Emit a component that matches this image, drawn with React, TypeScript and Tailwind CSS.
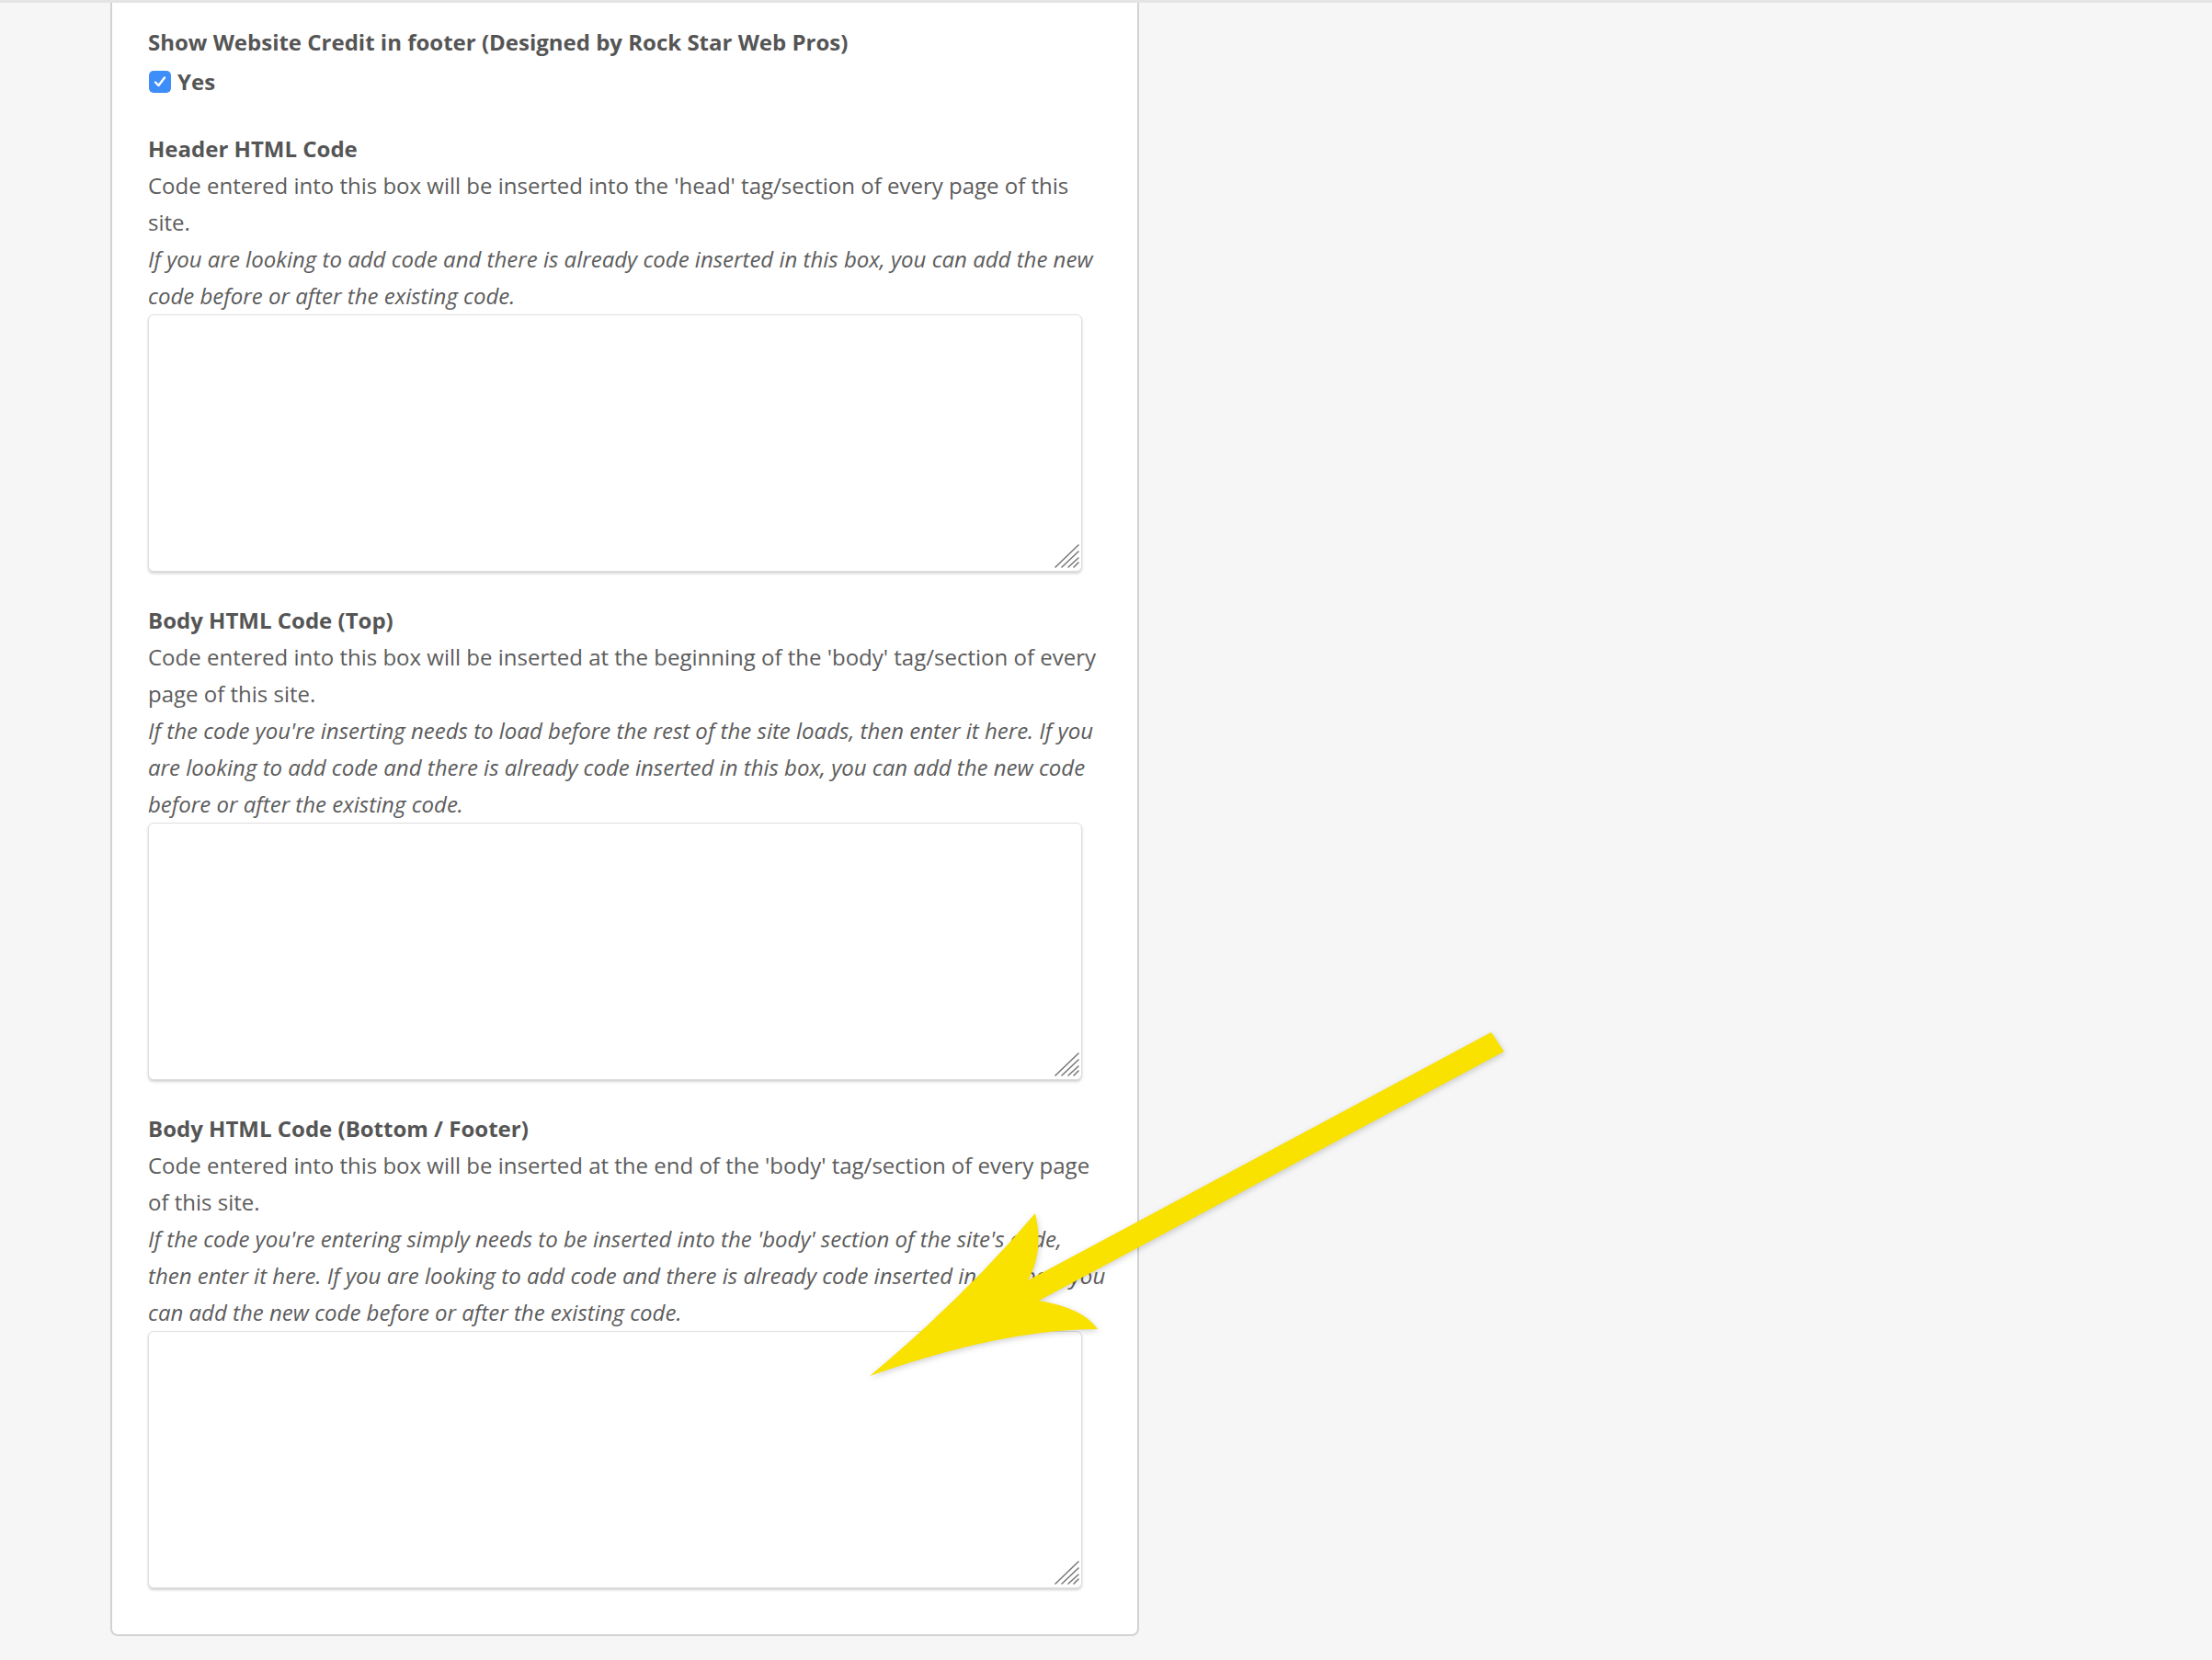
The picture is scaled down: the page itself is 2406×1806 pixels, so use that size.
import type { ReactNode } from 'react'

const fields = [
  {
    label: 'Header HTML Code',
    description: "Code entered into this box will be inserted into the 'head' tag/section of every page of this site.",
    note: 'If you are looking to add code and there is already code inserted in this box, you can add the new code before or after the existing code.',
  },
  {
    label: 'Body HTML Code (Top)',
    description: "Code entered into this box will be inserted at the beginning of the 'body' tag/section of every page of this site.",
    note: "If the code you're inserting needs to load before the rest of the site loads, then enter it here. If you are looking to add code and there is already code inserted in this box, you can add the new code before or after the existing code.",
  },
  {
    label: 'Body HTML Code (Bottom / Footer)',
    description: "Code entered into this box will be inserted at the end of the 'body' tag/section of every page of this site.",
    note: "If the code you're entering simply needs to be inserted into the 'body' section of the site's code, then enter it here. If you are looking to add code and there is already code inserted in this box, you can add the new code before or after the existing code.",
  },
]

function ResizeGrip() {
  return (
    <svg
      className="absolute right-[2px] bottom-[3px] pointer-events-none"
      width="28"
      height="28"
      viewBox="0 0 28 28"
    >
      <g stroke="#7a7a7a" strokeWidth="1.6" strokeLinecap="round">
        <line x1="1" y1="26" x2="26" y2="2" />
        <line x1="8" y1="26" x2="26" y2="9" />
        <line x1="15" y1="26" x2="26" y2="16" />
        <line x1="21" y1="26" x2="26" y2="21" />
      </g>
    </svg>
  )
}

function CodeField({ label, description, note }: { label: string; description: string; note: string }) {
  return (
    <div className="mt-[33px]">
      <h3 className="font-bold text-[#555]">{label}</h3>
      <p>{description}</p>
      <p className="italic">{note}</p>
      <div className="relative w-[1016px]">
        <textarea className="block w-full h-[280px] resize-none rounded-[6px] border border-[#dedede] bg-white shadow-[0_2px_3px_rgba(0,0,0,0.18)] outline-none" />
        <ResizeGrip />
      </div>
    </div>
  )
}

function Checkbox({ children }: { children: ReactNode }) {
  return (
    <label className="mt-[3px] flex items-center gap-[7px] font-bold text-[#555]">
      <span className="ml-px flex h-[24px] w-[24px] items-center justify-center rounded-[5px] bg-[#3d8ef8]">
        <svg width="16" height="16" viewBox="0 0 16 16" fill="none">
          <path d="M3 8.5 L6.5 12 L13 3.5" stroke="white" strokeWidth="2.4" strokeLinecap="round" strokeLinejoin="round" />
        </svg>
      </span>
      {children}
    </label>
  )
}

export default function App() {
  return (
    <div className="relative min-h-screen w-full overflow-hidden bg-[#f6f6f6] font-['Open_Sans',sans-serif] text-[24px] leading-[40px] text-[#5c5c5c]">
      <div className="h-[3px] bg-[#e4e4e4]" />

      <div className="ml-[120px] w-[1119px] rounded-b-[8px] border-2 border-t-0 border-[#d2d2d2] bg-white pl-[39px] pr-[31px] pt-[23px] pb-[50px]">
        <h3 className="font-bold text-[#555]">Show Website Credit in footer (Designed by Rock Star Web Pros)</h3>
        <Checkbox>Yes</Checkbox>

        {fields.map((field) => (
          <CodeField key={field.label} {...field} />
        ))}
      </div>

      {/* Annotation arrow */}
      <svg
        className="pointer-events-none absolute left-0 top-0 drop-shadow-[1px_2px_3px_rgba(0,0,0,0.18)]"
        width="2406"
        height="1806"
        viewBox="0 0 2406 1806"
      >
        <path
          d="M946 1497 Q1050 1410 1126 1320 Q1136 1362 1118 1393 L1622 1123 L1636 1144 L1130 1415 Q1178 1423 1194 1446 Q1090 1446 946 1497 Z"
          fill="#f9e100"
        />
      </svg>
    </div>
  )
}
